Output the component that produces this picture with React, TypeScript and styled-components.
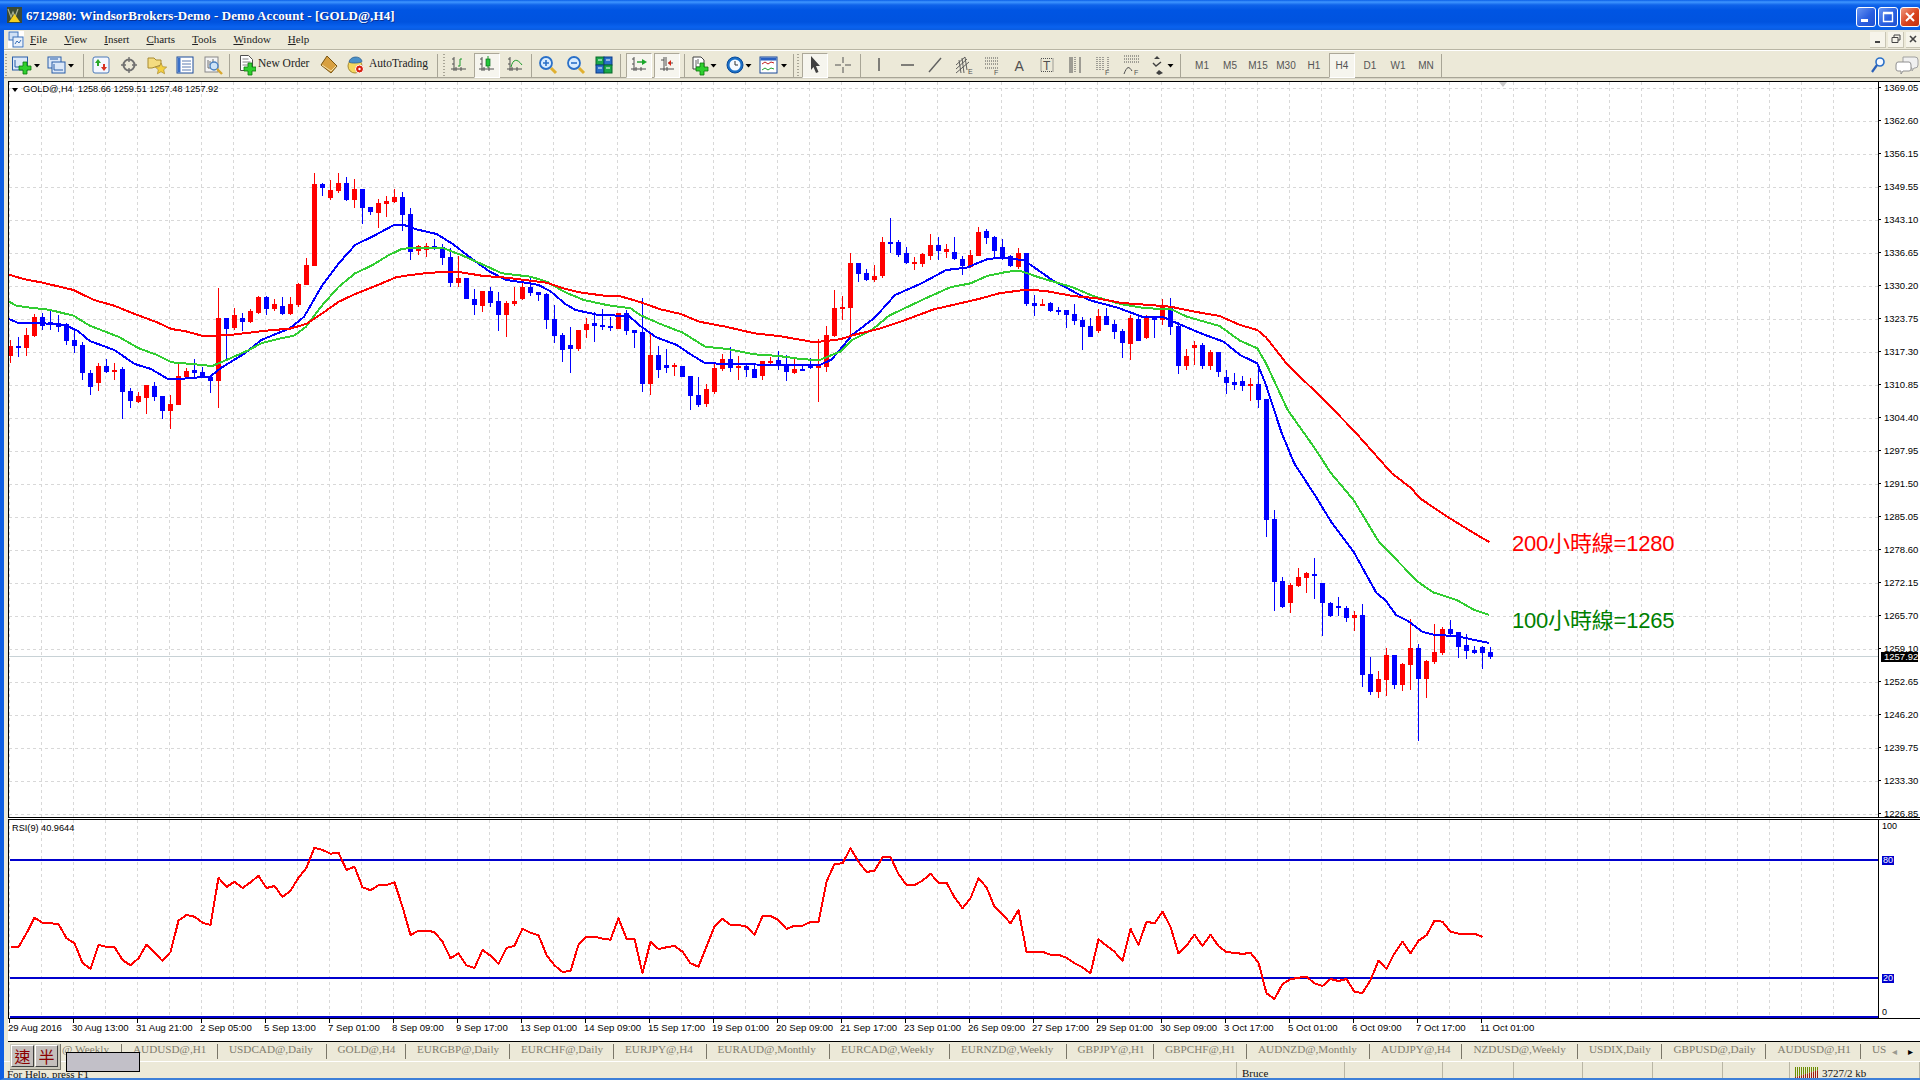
import React from 'react';
import styled, { createGlobalStyle } from 'styled-components';

const uiFont = `'Liberation Serif', 'Noto Sans CJK TC', serif`;
const chartFont = `'Liberation Sans', 'Noto Sans CJK TC', sans-serif`;

type Pt = [number, number];
// colour (1 red, 0 blue), wick top, body top, body bottom, wick bottom, measured on 3x crops
type Bar = [number, number, number, number, number];

const barsA: Bar[] = [
    [1,540,558,588,608],[0,530,558,564,590],[1,505,525,564,588],[1,462,471,528,530],[0,458,470,497,510],[0,452,487,495,510],
    [0,465,490,500,515],[0,490,492,543,555],[0,510,540,558,580],[0,545,555,638,660],[0,630,638,680,704],[1,610,618,668,692],
    [0,598,618,635,640],[1,610,630,635,660],[0,622,627,695,778],[0,685,693,722,743],[1,695,708,725,730],[1,675,675,713,762],
    [0,667,678,710,722],[0,708,708,752,778],[1,705,733,752,806],[1,612,648,734,735],[1,625,633,652,655],[0,597,630,638,650],
    [0,620,636,652,655],[0,650,652,662,698],[1,385,474,662,743],[0,474,474,507,600],[1,445,465,504,510],[0,460,474,486,513],
    [1,448,453,486,490],[1,408,411,459,462],[0,408,411,447,465],[1,418,432,447,452],[0,412,438,462,465],[1,410,432,462,465],
    [1,368,372,434,440],[1,295,315,374,375],[1,40,72,318,318],[0,70,72,83,108],[1,60,90,114,119],[1,40,69,93,100],
    [0,52,69,120,122],[1,57,87,120,143],[0,87,87,144,192],[0,140,141,156,165],[1,118,129,158,204],[1,108,123,132,172],
    [1,87,111,126,130],[0,96,111,165,212],[0,145,162,276,300],[1,255,258,273,285],[1,250,258,270,290],[0,237,258,264,270],
    [0,252,262,294,315],[0,265,291,369,380],[1,288,354,369,380],[0,354,354,417,418],[0,388,417,435,465],[1,393,393,438,456],
    [0,380,393,429,440],[0,395,423,465,513],[1,423,429,465,531],[1,380,423,432,438],[1,370,381,417,420],[0,355,381,399,408],
    [0,395,396,405,422],[0,400,402,480,507],[0,435,477,528,549],[0,520,525,570,606],[0,502,555,567,639],[1,510,510,567,572],
    [1,475,492,510,535],[0,455,489,498,546],[0,448,495,501,510],[0,470,498,504,512],[1,458,459,507,507],[0,450,459,513,525],
    [0,510,510,519,565],
];

const barsB: Bar[] = [
    [0,295,396,552,576],[1,395,465,552,585],[0,437,465,510,535],[0,447,495,504,520],[1,490,495,501,528],[0,497,498,531,532],
    [0,528,528,588,630],[0,531,585,615,622],[1,553,567,612,620],[1,490,504,576,582],[1,462,477,507,512],[0,442,477,504,515],
    [1,468,498,504,540],[0,488,498,510,532],[0,495,507,534,535],[1,483,483,528,540],[1,470,483,487,495],[0,452,480,498,510],
    [0,465,492,516,543],[1,475,507,519,522],[0,492,507,510,512],[0,475,499,503,507],[1,418,498,503,606],[1,378,405,501,516],
    [1,270,324,408,410],[1,288,321,327,360],[1,159,189,324,408],[0,189,189,222,246],[0,207,219,240,243],[1,195,228,240,246],
    [1,111,126,228,234],[0,54,126,129,160],[0,120,126,165,170],[0,142,159,189,192],[1,170,186,189,210],[1,160,162,192,200],
    [1,102,135,168,180],[0,111,135,153,180],[1,132,147,156,175],[0,111,156,177,180],[0,168,177,198,225],[1,150,165,201,204],
    [1,82,96,168,168],[0,87,93,114,132],[0,108,111,153,175],[0,117,141,177,180],[0,165,168,198,200],[1,144,159,201,206],
    [0,159,159,312,318],[0,285,310,318,348],[1,297,312,318,318],[0,306,309,333,336],[0,322,331,333,345],[0,330,330,345,384],
    [0,312,342,363,375],[0,350,360,381,450],[0,355,378,411,411],[1,328,348,393,399],[0,325,348,375,375],[0,360,372,396,417],
    [0,387,393,429,474],[1,345,354,432,480],[0,348,357,423,423],[1,345,348,414,417],[0,348,348,360,414],[1,297,315,360,375],
    [0,294,318,381,405],[0,366,378,498,522],[1,447,468,498,510],[1,423,435,444,495],[0,430,435,498,507],[1,450,456,498,510],
    [0,455,456,516,530],[0,510,531,549,582],[0,520,546,555,570],[0,528,543,558,573],[1,535,552,555,603],[0,505,552,600,624],
];

const barsC: Bar[] = [
    [0,297,297,659,710],[0,630,657,846,932],[0,830,843,921,924],[1,850,855,908,938],[1,803,831,857,860],[1,815,820,833,880],
    [0,774,822,825,897],[0,849,849,908,1007],[0,906,909,948,950],[0,891,918,923,948],[0,918,924,953,965],[1,933,945,953,992],
    [0,912,945,1124,1160],[0,1071,1122,1175,1185],[1,1112,1137,1175,1193],[1,1044,1065,1140,1187],[0,1065,1065,1155,1167],[1,1089,1092,1155,1172],
    [1,958,1044,1095,1170],[0,1032,1044,1137,1323],[1,1080,1083,1137,1193],[1,972,1056,1086,1092],[1,980,987,1060,1065],[0,960,987,1002,1010],
    [0,996,996,1041,1074],[0,1002,1035,1053,1077],[0,1038,1050,1059,1062],[0,1038,1041,1059,1107],[0,1041,1056,1071,1077],
];

const toBars = (rows: Bar[], base: number): Bar[] =>
    rows.map(([c, a, b, d, e]) => [c, base + a / 3, base + b / 3, base + d / 3, base + e / 3]);

const allBars = [...toBars(barsA, 160), ...toBars(barsB, 200), ...toBars(barsC, 300)];

const crop = (x0: number, y0: number, sx: number) => (rows: Pt[]): Pt[] =>
    rows.map(([x, y]) => [x0 + x / sx, y0 + y / 3]);
const cropA = crop(0, 160, 2.45);
const cropB = crop(640, 200, 2.45);
const cropC = crop(1240, 300, 2.306);

const maRed = [
    ...cropA([[22,344],[60,358],[100,367],[180,390],[230,420],[280,437],[330,462],[385,487],[420,507],[455,514],[495,527],[530,527],[570,524],[610,518],[660,511],[710,506],[750,492],[790,460],[830,425],[870,402],[920,378],[970,352],[1000,346],[1040,340],[1090,335],[1130,337],[1180,347],[1240,353],[1300,362],[1340,368],[1380,385],[1420,397],[1480,407],[1520,409],[1568,426]]),
    ...cropB([[50,328],[100,342],[145,365],[210,380],[280,400],[340,408],[420,425],[440,425],[490,418],[530,403],[590,385],[650,360],[720,328],[830,297],[880,280],[940,270],[990,272],[1060,288],[1120,295],[1180,309],[1240,314],[1300,320],[1350,333],[1420,348]]),
    ...cropC([[0,75],[40,90],[60,112],[110,195],[190,295],[265,395],[350,520],[395,565],[415,595],[480,652],[540,700],[575,726]]),
];

const maGreen = [
    ...cropA([[22,425],[40,437],[80,444],[120,449],[180,467],[220,497],[290,530],[340,565],[385,585],[420,607],[470,612],[520,618],[560,597],[610,570],[640,550],[680,537],[720,527],[750,500],[790,435],[830,380],[870,340],[910,317],[950,287],[985,266],[1020,264],[1085,264],[1130,285],[1180,312],[1230,340],[1300,350],[1340,365],[1385,397],[1430,420],[1490,436],[1545,445],[1568,465]]),
    ...cropB([[50,372],[105,398],[160,440],[215,447],[280,463],[340,468],[400,478],[440,480],[490,455],[520,420],[570,388],[610,347],[700,295],[760,262],[810,250],[850,228],[900,215],[930,212],[980,233],[1060,262],[1110,288],[1180,313],[1240,325],[1300,327],[1340,350],[1420,378]]),
    ...cropC([[0,122],[40,145],[60,190],[110,330],[170,440],[210,520],[262,600],[320,725],[410,845],[445,877],[500,900],[540,930],[575,945]]),
];

const maBlue = [
    ...cropA([[22,477],[45,489],[100,489],[160,496],[190,512],[220,543],[280,570],[330,612],[370,627],[410,656],[440,657],[490,652],[515,650],[540,625],[600,580],[640,540],[710,505],[745,470],[790,375],[830,310],[870,255],[920,225],[965,195],[990,195],[1020,208],[1070,222],[1110,253],[1160,300],[1200,335],[1240,360],[1280,367],[1320,375],[1350,395],[1385,432],[1410,450],[1470,466],[1540,467],[1568,497]]),
    ...cropB([[40,412],[90,435],[120,460],[160,490],[250,492],[340,496],[440,496],[470,478],[520,405],[575,353],[625,285],[690,250],[750,210],[800,203],[850,178],[880,173],[940,180],[1010,240],[1100,300],[1170,323],[1230,350],[1280,350],[1320,372],[1380,403],[1430,425]]),
    ...cropC([[0,165],[40,190],[60,255],[95,395],[125,490],[175,590],[210,665],[262,755],[315,880],[335,900],[360,945],[390,965],[420,995],[450,1005],[500,1008],[540,1020],[575,1029]]),
];

const rsiY = (ys: number[], first: number) => ys.map((y, i): Pt => [first + i * 8, 810 + y / 3]);
const rsiLine = rsiY(
    [411,411,370,323,338,340,342,385,400,458,477,404,411,411,450,466,445,404,428,453,426,332,315,320,338,345,203,231,215,234,217,197,234,228,261,242,203,173,113,120,131,128,180,170,232,241,226,225,217,290,375,362,362,366,395,445,430,466,474,420,437,462,414,407,356,368,376,435,466,486,483,404,380,380,386,389,325,386,386,
     490,395,417,412,408,425,460,470,410,350,326,345,345,350,375,318,318,330,357,347,347,336,335,215,162,160,115,155,186,182,142,141,192,225,225,212,191,218,218,262,295,265,205,232,290,313,340,300,425,425,425,434,434,443,460,472,490,388,407,425,453,356,405,335,340,305,350,430,407,374,408,374,408,427,428,432,428,458,550,567,
     522,508,503,500,520,528,507,513,507,546,549,510,452,477,430,395,430,392,376,332,335,365,371,371,371,381],
    10.5,
);

const toPoints = (pts: Pt[]) => pts.map(([x, y]) => `${x.toFixed(1)},${y.toFixed(1)}`).join(' ');

const priceLabels = ['1369.05','1362.60','1356.15','1349.55','1343.10','1336.65','1330.20','1323.75','1317.30','1310.85','1304.40','1297.95','1291.50','1285.05','1278.60','1272.15','1265.70','1259.10','1252.65','1246.20','1239.75','1233.30','1226.85'];
const timeLabels = ['29 Aug 2016','30 Aug 13:00','31 Aug 21:00','2 Sep 05:00','5 Sep 13:00','7 Sep 01:00','8 Sep 09:00','9 Sep 17:00','13 Sep 01:00','14 Sep 09:00','15 Sep 17:00','19 Sep 01:00','20 Sep 09:00','21 Sep 17:00','23 Sep 01:00','26 Sep 09:00','27 Sep 17:00','29 Sep 01:00','30 Sep 09:00','3 Oct 17:00','5 Oct 01:00','6 Oct 09:00','7 Oct 17:00','11 Oct 01:00'];
const tabs: [string, number][] = [['@,Weekly',118],['AUDUSD@,H1',96],['USDCAD@,Daily',108.5],['GOLD@,H4',79.5],['EURGBP@,Daily',104],['EURCHF@,Daily',104],['EURJPY@,H4',92.5],['EURAUD@,Monthly',123.5],['EURCAD@,Weekly',120],['EURNZD@,Weekly',116.5],['GBPJPY@,H1',87.5],['GBPCHF@,H1',93],['AUDNZD@,Monthly',123],['AUDJPY@,H4',92.4],['NZDUSD@,Weekly',115.6],['USDIX,Daily',84.4],['GBPUSD@,Daily',104.1],['AUDUSD@,H1',94.5],['US',60]];
const menus = [['F','ile'],['V','iew'],['I','nsert'],['C','harts'],['T','ools'],['W','indow'],['H','elp']];
const periods = ['M1','M5','M15','M30','H1','H4','D1','W1','MN'];
const statusCells = [1233, 108, 98, 71, 69, 70, 70, 67];

const GlobalStyle = createGlobalStyle`
    html, body {
        margin: 0;
        width: 1920px;
        height: 1080px;
        overflow: hidden;
        background: #ece9d8;
    }
`;

const Window = styled.div`
    position: relative;
    display: flex;
    flex-direction: column;
    width: 1920px;
    height: 1080px;
    overflow: hidden;
    font-family: ${uiFont};
    background: #ece9d8;
`;

const TitleBar = styled.div`
    flex: 0 0 30px;
    display: flex;
    align-items: center;
    padding-left: 7px;
    background: linear-gradient(180deg, #0a5fe8 0, #3f96ff 2px, #0f63ea 5px, #0055e3 10px, #0053df 22px, #0a62ee 27px, #0a5ce0 30px);
`;

const TitleText = styled.span`
    margin-left: 4px;
    padding-top: 2px;
    color: #ffffff;
    font-size: 13px;
    font-weight: 700;
    letter-spacing: 0.08px;
    white-space: nowrap;
    text-shadow: 1px 1px 0 #0a2f90;
`;

const WindowButtons = styled.div`
    display: flex;
    gap: 2px;
    margin-left: auto;
    padding-top: 3px;
`;

const CaptionButton = styled.div<{ $close?: boolean }>`
    width: 20px;
    height: 20px;
    display: flex;
    align-items: center;
    justify-content: center;
    box-sizing: border-box;
    border: 1px solid #ffffff;
    border-radius: 3px;
    background: ${({ $close }) =>
        $close ? 'linear-gradient(135deg, #ee9a80, #d9421c 55%, #c23210)' : 'linear-gradient(135deg, #6a96f2, #2a5fe0 55%, #2050d0)'};
`;

const Body = styled.div`
    flex: 1;
    min-height: 0;
    display: flex;
    flex-direction: column;
    border-left: 4px solid #0f5fe4;
    border-bottom: 2px solid #3d7fd8;
`;

const MenuBar = styled.div`
    flex: 0 0 20px;
    display: flex;
    align-items: center;
    box-sizing: border-box;
    padding-left: 4px;
    border-bottom: 1px solid #b8b5a4;
`;

const MenuItem = styled.span`
    margin-right: 17px;
    margin-top: -2px;
    font-size: 11px;
    color: #222222;
`;

const MdiButtons = styled.div`
    display: flex;
    gap: 2px;
    margin-left: auto;
`;

const MdiButton = styled.div`
    width: 16px;
    height: 16px;
    display: flex;
    align-items: center;
    justify-content: center;
    box-sizing: border-box;
    background: #f6f4ea;
    border-right: 1px solid #c8c5b4;
    border-bottom: 1px solid #c8c5b4;
    &:last-child {
        width: 14px;
        border-right: 0;
    }
`;

const Toolbar = styled.div`
    flex: 0 0 28px;
    min-height: 0;
    display: flex;
    align-items: center;
    box-sizing: border-box;
    padding-top: 2px;
    border-top: 1px solid #ffffff;
    border-bottom: 1px solid #a8a596;
    box-shadow: 0 1px 0 #d8d5c6;
`;

const Grip = styled.div<{ $left?: number; $w: number }>`
    flex: 0 0 ${({ $w }) => $w}px;
    height: 22px;
    background: repeating-linear-gradient(180deg, #a8a596 0 1px, transparent 1px 3px) no-repeat;
    background-size: 2px 100%;
    background-position: ${({ $left }) => $left ?? 1}px 0;
`;

const Divider = styled.div<{ $w: number; $left: number }>`
    flex: 0 0 ${({ $w }) => $w}px;
    height: 23px;
    background: linear-gradient(#a8a596, #a8a596) no-repeat;
    background-size: 1px 100%;
    background-position: ${({ $left }) => $left}px 0;
`;

const ToolButton = styled.div<{ $pressed?: boolean; $w?: number }>`
    flex: 0 0 ${({ $w }) => $w ?? 26}px;
    min-width: 0;
    height: 25px;
    margin: 0 1px;
    box-sizing: border-box;
    display: flex;
    align-items: center;
    justify-content: center;
    ${({ $pressed }) =>
        $pressed &&
        `background: #f6f5ee;
         border-top: 1px solid #aca899;
         border-left: 1px solid #aca899;
         border-right: 1px solid #ffffff;
         border-bottom: 1px solid #ffffff;`}
`;

const DropButton = styled.div<{ $w: number }>`
    flex: 0 0 ${({ $w }) => $w}px;
    min-width: 0;
    height: 26px;
`;

const TextButton = styled.div<{ $w: number; $icon: number }>`
    flex: 0 0 ${({ $w }) => $w}px;
    min-width: 0;
    box-sizing: border-box;
    display: flex;
    align-items: center;
    height: 26px;
    padding-left: ${({ $icon }) => $icon}px;
    font-size: 11.5px;
    color: #222222;
    white-space: nowrap;
`;

const ToolLabel = styled.span`
    margin-top: -4px;
`;

const PeriodButton = styled(ToolButton)`
    font-family: ${chartFont};
    font-size: 10px;
    color: #555555;
`;

const ToolGap = styled.div<{ $w: number }>`
    flex: 0 0 ${({ $w }) => $w}px;
`;

const ToolbarEnd = styled.div`
    display: flex;
    margin-left: auto;
`;

const ChartWindow = styled.div`
    flex: 1;
    min-height: 0;
    margin-top: 3px;
    padding-left: 4px;
    display: flex;
    flex-direction: column;
`;

const Pane = styled.div<{ $h: number; $closed?: boolean }>`
    flex: 0 0 ${({ $h }) => $h}px;
    min-height: 0;
    overflow: hidden;
    display: flex;
    background: #ffffff;
    border-top: 1px solid #000000;
    border-bottom: ${({ $closed }) => ($closed ? '1px solid #000000' : '0')};
    box-sizing: border-box;
`;

const PaneGap = styled.div`
    flex: 0 0 1px;
    background: #ffffff;
`;

const Plot = styled.div`
    position: relative;
    flex: 0 0 1871px;
    box-sizing: border-box;
    border-left: 1px solid #000000;
    border-right: 1px solid #000000;
    overflow: hidden;
    svg {
        display: block;
    }
`;

const Legend = styled.div`
    position: absolute;
    left: 3px;
    top: 2px;
    display: flex;
    align-items: center;
    font-family: ${chartFont};
    font-size: 9.2px;
    line-height: 11px;
    color: #000000;
    white-space: pre;
`;

const LegendCaret = styled.span`
    width: 0;
    height: 0;
    margin-right: 5px;
    border-left: 3.5px solid transparent;
    border-right: 3.5px solid transparent;
    border-top: 4px solid #000000;
`;

const MaNote = styled.div<{ $top: number; $color: string }>`
    position: absolute;
    left: 1503px;
    top: ${({ $top }) => $top}px;
    font-family: ${chartFont};
    font-size: 22px;
    line-height: 26px;
    letter-spacing: -0.2px;
    color: ${({ $color }) => $color};
    white-space: nowrap;
`;

const PriceAxis = styled.div`
    position: relative;
    flex: 1;
    overflow: hidden;
`;

const PriceList = styled.div`
    margin-top: -11px;
    display: flex;
    flex-direction: column;
`;

const PriceRow = styled.div`
    flex: 0 0 33px;
    display: flex;
    align-items: center;
    font-family: ${chartFont};
    font-size: 9.5px;
    color: #000000;
    &::before {
        content: '';
        width: 2px;
        height: 1px;
        margin-right: 3px;
        background: #000000;
    }
`;

const LastPrice = styled.div`
    position: absolute;
    left: 2px;
    top: 570px;
    width: 37px;
    height: 10px;
    background: #000000;
    color: #ffffff;
    font-family: ${chartFont};
    font-size: 9.5px;
    line-height: 10px;
    padding-left: 3px;
    box-sizing: border-box;
`;

const LevelLabel = styled.div<{ $top: number; $boxed?: boolean }>`
    position: absolute;
    left: 3px;
    top: ${({ $top }) => $top}px;
    height: 9px;
    padding: 0 ${({ $boxed }) => ($boxed ? '1px' : '0')};
    font-family: ${chartFont};
    font-size: 9px;
    line-height: 9px;
    color: ${({ $boxed }) => ($boxed ? '#ffffff' : '#000000')};
    background: ${({ $boxed }) => ($boxed ? '#0000cd' : 'transparent')};
`;

const PaneTitle = styled.div`
    position: absolute;
    left: 3px;
    top: 3px;
    font-family: ${chartFont};
    font-size: 9.2px;
    line-height: 11px;
    color: #000000;
`;

const TimeAxis = styled.div`
    flex: 0 0 24px;
    box-sizing: border-box;
    display: grid;
    grid-template-columns: repeat(24, 64px);
    background: #ffffff;
    border-top: 1px solid #000000;
    border-bottom: 1px solid #000000;
`;

const TimeCell = styled.div`
    position: relative;
    padding-top: 3px;
    font-family: ${chartFont};
    font-size: 9.6px;
    line-height: 12px;
    color: #000000;
    white-space: nowrap;
    &::before {
        content: '';
        position: absolute;
        left: 1px;
        top: 0;
        width: 1px;
        height: 4px;
        background: #000000;
    }
`;

const TabBar = styled.div`
    flex: 0 0 20px;
    display: flex;
    box-sizing: border-box;
    border-bottom: 1px solid #ffffff;
`;

const TabScroller = styled.div`
    flex: 0 0 1885px;
    display: flex;
    align-items: center;
    overflow: hidden;
`;

const Tab = styled.div<{ $w: number; $pad: number; $last?: boolean }>`
    flex: 0 0 ${({ $w }) => $w}px;
    box-sizing: border-box;
    height: 15px;
    padding-left: ${({ $pad }) => $pad}px;
    border-right: ${({ $last }) => ($last ? '0' : '1px solid #7a7668')};
    font-size: 11.2px;
    line-height: 11px;
    color: #7f7b6c;
    white-space: nowrap;
`;

const TabArrows = styled.div`
    display: flex;
    align-items: center;
    gap: 11px;
    padding-left: 3px;
    color: #000000;
    font-family: ${chartFont};
    font-size: 10px;
`;

const StatusBar = styled.div`
    flex: 0 0 16px;
    display: flex;
    overflow: hidden;
`;

const StatusCell = styled.div<{ $w?: number }>`
    flex: ${({ $w }) => ($w ? `0 0 ${$w}px` : '1')};
    box-sizing: border-box;
    display: flex;
    align-items: flex-start;
    padding: 5px 0 0 5px;
    border-right: 1px solid #b8b5a4;
    font-size: 11px;
    line-height: 12px;
    color: #111111;
    white-space: nowrap;
`;

const HelpText = styled.span`
    margin-left: -2px;
    margin-top: 1px;
`;

const ImeBar = styled.div`
    position: absolute;
    left: 10px;
    top: 1044px;
    display: flex;
    gap: 1px;
    padding: 1px 2px 2px 1px;
    background: #c9c7ba;
    border-right: 1px solid #77756a;
    border-bottom: 1px solid #77756a;
`;

const ImeKey = styled.div`
    width: 23px;
    height: 22px;
    box-sizing: border-box;
    display: flex;
    align-items: center;
    justify-content: center;
    font-family: 'Noto Sans CJK TC', sans-serif;
    font-size: 16px;
    color: #8b0000;
    background: #c4bfbc;
    border-top: 1px solid #ffffff;
    border-left: 1px solid #ffffff;
    border-right: 1px solid #404040;
    border-bottom: 1px solid #404040;
`;

const ImeStatus = styled.div`
    position: absolute;
    left: 66px;
    top: 1052px;
    width: 74px;
    height: 20px;
    box-sizing: border-box;
    background: #c2c0c8;
    border: 1px solid #000000;
`;

const Plus = ({ x, y }: { x: number; y: number }) => (
    <path
        d={`M${x - 2} ${y - 6}h4v4h4v4h-4v4h-4v-4h-4v-4h4z`}
        fill="#2fd02f"
        stroke="#0a7a0a"
        strokeWidth="0.8"
    />
);

const Caret = ({ x }: { x: number }) => <path d={`M${x - 3} -1h6l-3 3.5z`} fill="#000000" />;

const Icon = ({ children, w = 26 }: { children: React.ReactNode; w?: number }) => (
    <svg width={w} height="26" viewBox={`-13 -13 ${w} 26`} style={{ flex: 'none', display: 'block' }}>
        {children}
    </svg>
);

const Axes = () => (
    <path d="M-5 -8V6M-8 4H7M-7 -6H-5M-7 -1H-5M-3 2V6M2 2V6" stroke="#505050" strokeWidth="1" fill="none" />
);

const Glass = ({ mark }: { mark: string }) => (
    <g>
        <path d="M3 3L8 8" stroke="#e0b030" strokeWidth="3" />
        <circle cx="-2" cy="-2" r="6" fill="#d8ecff" stroke="#2a70c8" strokeWidth="1.8" />
        <path d={mark} stroke="#2a70c8" strokeWidth="1.6" />
    </g>
);

const GlyphText = ({ x, y, size, children, weight = 400 }: { x: number; y: number; size: number; children: string; weight?: number }) => (
    <text x={x} y={y} fontFamily="Liberation Sans, sans-serif" fontSize={size} fontWeight={weight} fill="#505050">
        {children}
    </text>
);

const Dotted = ({ d }: { d: string }) => <path d={d} stroke="#505050" strokeWidth="1" strokeDasharray="1 1" fill="none" />;

const Candles = () => (
    <g shapeRendering="crispEdges">
        {allBars.map(([c, wt, bt, bb, wb], i) => {
            const x = 10 + i * 8;
            const fill = c ? '#ff0000' : '#0000ff';
            return (
                <g key={i} fill={fill}>
                    <rect x={x} y={wt} width="1" height={Math.max(wb - wt, 1)} />
                    <rect x={x - 2} y={bt} width="5" height={Math.max(bb - bt, 2)} />
                </g>
            );
        })}
    </g>
);

const verticals = Array.from({ length: 58 }, (_, i) => 9.5 + i * 32);
const horizontals = Array.from({ length: 23 }, (_, i) => 88.5 + i * 33);

const Grid = ({ y1, y2, rows }: { y1: number; y2: number; rows: boolean }) => (
    <g stroke="#d8d8d8" strokeWidth="1" strokeDasharray="3 3" shapeRendering="crispEdges">
        {verticals.map((x) => (
            <line key={x} x1={x} x2={x} y1={y1} y2={y2} />
        ))}
        {rows && horizontals.map((y) => <line key={y} x1={9} x2={1879} y1={y} y2={y} />)}
    </g>
);

const MainChart = () => (
    <svg width="1869" height="735" viewBox="9 82 1869 735">
        <Grid y1={82} y2={817} rows />
        <line x1="9" x2="1879" y1="656.5" y2="656.5" stroke="#c8d2d6" shapeRendering="crispEdges" />
        <path d="M1499 82h8l-4 5z" fill="#c8c8c8" />
        <Candles />
        <g fill="none" strokeWidth="2" strokeLinejoin="round" shapeRendering="crispEdges">
            <polyline points={toPoints(maBlue)} stroke="#0000ff" />
            <polyline points={toPoints(maGreen)} stroke="#32cd32" />
            <polyline points={toPoints(maRed)} stroke="#ff0000" />
        </g>
    </svg>
);

const RsiChart = () => (
    <svg width="1869" height="198" viewBox="9 820 1869 198">
        <Grid y1={820} y2={1018} rows={false} />
        <g stroke="#0000cd" strokeWidth="2" shapeRendering="crispEdges">
            <line x1="10" x2="1879" y1="860" y2="860" />
            <line x1="10" x2="1879" y1="978" y2="978" />
            <line x1="10" x2="1879" y1="1017" y2="1017" />
        </g>
        <polyline points={toPoints(rsiLine)} fill="none" stroke="#ff0000" strokeWidth="2" strokeLinejoin="round" shapeRendering="crispEdges" />
    </svg>
);

export default function App() {
    return (
        <>
            <GlobalStyle />
            <Window>
                <TitleBar>
                    <svg width="15" height="16" viewBox="0 0 15 16">
                        <rect width="15" height="16" fill="#3c4a34" />
                        <path d="M1 2l3 8 2-5 2 5 3-8" stroke="#a8b090" strokeWidth="1.2" fill="none" />
                        <path d="M7.5 7L13 15H2z" fill="#f4d020" />
                    </svg>
                    <TitleText>6712980: WindsorBrokers-Demo - Demo Account - [GOLD@,H4]</TitleText>
                    <WindowButtons>
                        <CaptionButton>
                            <svg width="14" height="14"><rect x="2" y="9" width="7" height="3" fill="#ffffff" /></svg>
                        </CaptionButton>
                        <CaptionButton>
                            <svg width="14" height="14"><path d="M2.5 3.5h9v8h-9zM2 2.5h10" fill="none" stroke="#ffffff" strokeWidth="1.4" /></svg>
                        </CaptionButton>
                        <CaptionButton $close>
                            <svg width="14" height="14"><path d="M3 3l8 8M11 3l-8 8" stroke="#ffffff" strokeWidth="2" /></svg>
                        </CaptionButton>
                    </WindowButtons>
                </TitleBar>
                <Body>
                    <MenuBar>
                        <svg width="16" height="17" viewBox="0 0 16 17" style={{ marginRight: 6 }}>
                            <rect width="16" height="17" fill="#ffffff" />
                            <rect x="1" y="1" width="9" height="8" fill="#cfe0f5" stroke="#3a70b8" />
                            <rect x="5" y="6" width="10" height="10" fill="#e8f0fa" stroke="#3a70b8" />
                            <path d="M7 13l2-3 2 2 2-3" stroke="#3a70b8" fill="none" />
                        </svg>
                        {menus.map(([key, rest]) => (
                            <MenuItem key={key}>
                                <u>{key}</u>
                                {rest}
                            </MenuItem>
                        ))}
                        <MdiButtons>
                            <MdiButton>
                                <svg width="10" height="10"><rect x="2" y="7" width="5" height="2" fill="#444444" /></svg>
                            </MdiButton>
                            <MdiButton>
                                <svg width="10" height="10"><path d="M3 3V1h6v5H7M1 3.5h6v5H1z" fill="none" stroke="#444444" /></svg>
                            </MdiButton>
                            <MdiButton>
                                <svg width="10" height="10"><path d="M2 2l6 6M8 2l-6 6" stroke="#444444" strokeWidth="1.6" /></svg>
                            </MdiButton>
                        </MdiButtons>
                    </MenuBar>
                    <Toolbar>
                        <Grip $w={5} />
                        <DropButton $w={35}>
                            <Icon w={35}>
                                <rect x="-9.5" y="-8" width="15" height="13" fill="#dce8f8" stroke="#2a5ea8" />
                                <path d="M-7 -5V2H2" stroke="#2a5ea8" fill="none" />
                                <Plus x={3} y={3} />
                                <g transform="translate(15 0)"><Caret x={0} /></g>
                            </Icon>
                        </DropButton>
                        <DropButton $w={35}>
                            <Icon w={35}>
                                <rect x="-9" y="-8" width="13" height="11" fill="#dce8f8" stroke="#2a5ea8" />
                                <rect x="-5" y="-3" width="13" height="11" fill="#dce8f8" stroke="#2a5ea8" />
                                <path d="M-3 -1V5H6M-7 -6H1" stroke="#2a5ea8" fill="none" />
                                <g transform="translate(14 0)"><Caret x={0} /></g>
                            </Icon>
                        </DropButton>
                        <Divider $w={8} $left={4} />
                        <ToolButton>
                            <Icon>
                                <rect x="-8" y="-8" width="16" height="16" rx="2" fill="#f4f7ff" stroke="#4a78b8" />
                                <path d="M-3 -6L0 -2H-2V1H-4V-2H-6z" fill="#2aa82a" />
                                <path d="M3 6L0 2H2V-1H4V2H6z" fill="#d83020" />
                            </Icon>
                        </ToolButton>
                        <ToolButton>
                            <Icon>
                                <circle cx="0" cy="0" r="5.5" fill="none" stroke="#707070" strokeWidth="2" />
                                <path d="M0 -8V-3M0 3V8M-8 0H-3M3 0H8" stroke="#707070" strokeWidth="1.4" />
                            </Icon>
                        </ToolButton>
                        <ToolButton>
                            <Icon>
                                <path d="M-9 -7h6l2 2h5v5l-9 3h-4z" fill="#f4dc80" stroke="#a88a30" />
                                <path d="M4 -2l1.7 3.7 4 .4-3 2.7.9 4-3.6-2.1-3.6 2.1.9-4-3-2.7 4-.4z" fill="#f4d040" stroke="#a88a30" strokeWidth="0.7" />
                            </Icon>
                        </ToolButton>
                        <ToolButton>
                            <Icon>
                                <rect x="-8" y="-8" width="16" height="16" fill="#ffffff" stroke="#1a4a98" />
                                <rect x="-7.5" y="-7.5" width="3" height="15" fill="#3a70c8" />
                                <path d="M-3 -4H6M-3 -1H6M-3 2H6M-3 5H6" stroke="#5a7ab0" />
                            </Icon>
                        </ToolButton>
                        <ToolButton>
                            <Icon>
                                <rect x="-8" y="-8" width="13" height="15" fill="#f4f4f4" stroke="#888888" />
                                <path d="M-5 -5V3H3M-3 -4V0M0 -6V-1" stroke="#707070" fill="none" />
                                <circle cx="1" cy="1" r="4" fill="#cfe4f8" stroke="#4a80c0" strokeWidth="1.4" />
                                <path d="M4 4L9 9" stroke="#d8a830" strokeWidth="2.4" />
                            </Icon>
                        </ToolButton>
                        <Divider $w={4} $left={2} />
                        <TextButton $w={84} $icon={9}>
                            <svg width="16" height="22" viewBox="0 0 16 22" style={{ marginRight: 2 }}>
                                <path d="M0.5 1.5h8l4 4v11h-12z" fill="#ffffff" stroke="#505050" />
                                <path d="M2.5 5h6M2.5 8h8M2.5 11h6" stroke="#808080" />
                                <g transform="translate(1 0)"><Plus x={9} y={15} /></g>
                            </svg>
                            <ToolLabel>New Order</ToolLabel>
                        </TextButton>
                        <ToolButton>
                            <Icon>
                                <path d="M-2 -9L8 1 2 8l-10-8z" fill="#d8a040" stroke="#7a5410" />
                                <path d="M-7 0L2 6 7 1" fill="none" stroke="#f4e0a8" />
                            </Icon>
                        </ToolButton>
                        <TextButton $w={89} $icon={4}>
                            <svg width="18" height="22" viewBox="0 0 18 22" style={{ marginRight: 4 }}>
                                <circle cx="8" cy="12" r="7" fill="#f4d860" stroke="#a88a30" />
                                <path d="M2 8c1-6 11-7 13-1 1 2-11 3-13 1z" fill="#4a90c8" stroke="#2a5a88" strokeWidth="0.7" />
                                <circle cx="12.5" cy="15" r="4" fill="#d82010" stroke="#ffffff" />
                                <circle cx="12.5" cy="15" r="1.2" fill="#ffffff" />
                            </svg>
                            <ToolLabel>AutoTrading</ToolLabel>
                        </TextButton>
                        <Divider $w={9} $left={5} />
                        <Grip $w={4} $left={2} />
                        <ToolButton>
                            <Icon>
                                <Axes />
                                <path d="M1 -6V1M1 -6H3M1 1H-1" stroke="#1a9a2a" fill="none" />
                            </Icon>
                        </ToolButton>
                        <ToolButton $pressed>
                            <Icon>
                                <Axes />
                                <path d="M1 -9V3" stroke="#1a9a2a" />
                                <rect x="-1" y="-6" width="4" height="7" fill="#22c83a" stroke="#0a6a1a" strokeWidth="0.7" />
                            </Icon>
                        </ToolButton>
                        <ToolButton>
                            <Icon>
                                <Axes />
                                <path d="M-4 2C-2 -6 2 -7 7 0" stroke="#1a9a2a" fill="none" />
                            </Icon>
                        </ToolButton>
                        <Divider $w={5} $left={2} />
                        <ToolButton>
                            <Icon><Glass mark="M-5 -2H1M-2 -5V1" /></Icon>
                        </ToolButton>
                        <ToolButton>
                            <Icon><Glass mark="M-5 -2H1" /></Icon>
                        </ToolButton>
                        <ToolButton>
                            <Icon>
                                <rect x="-8" y="-8" width="8" height="8" fill="#1aa84a" stroke="#0a6a2a" />
                                <rect x="0" y="-8" width="8" height="8" fill="#2a70c8" stroke="#0a3a88" />
                                <rect x="-8" y="0" width="8" height="8" fill="#2a70c8" stroke="#0a3a88" />
                                <rect x="0" y="0" width="8" height="8" fill="#1aa84a" stroke="#0a6a2a" />
                                <path d="M-6 -5H-2M2 -5H6M-6 3H-2M2 3H6" stroke="#ffffff" />
                            </Icon>
                        </ToolButton>
                        <Divider $w={7} $left={2} />
                        <ToolButton $pressed>
                            <Icon>
                                <Axes />
                                <path d="M-2 -3H4" stroke="#1a9a2a" strokeWidth="1.4" />
                                <path d="M3 -6L8 -3 3 0z" fill="#1aa82a" />
                            </Icon>
                        </ToolButton>
                        <ToolButton $pressed>
                            <Icon>
                                <path d="M-3 -8V6M-7 4H7M-6 -5H-3M0 2V6" stroke="#505050" fill="none" />
                                <path d="M1 -2H6M-1 -8V1" stroke="#505050" />
                                <path d="M1 -2L4 -5V1z" fill="#d82010" />
                            </Icon>
                        </ToolButton>
                        <Divider $w={6} $left={3} />
                        <DropButton $w={34}>
                            <Icon w={34}>
                                <path d="M-7 -8h8l3 3v9h-11z" fill="#ffffff" stroke="#404040" />
                                <path d="M-4 -5V2H1M-2 -6V-1" stroke="#606060" fill="none" />
                                <Plus x={2} y={4} />
                                <g transform="translate(13.5 0)"><Caret x={0} /></g>
                            </Icon>
                        </DropButton>
                        <DropButton $w={34}>
                            <Icon w={34}>
                                <circle cx="1" cy="0" r="8" fill="#1a70c8" stroke="#0a4a98" />
                                <circle cx="1" cy="0" r="5.5" fill="#f4f8ff" />
                                <path d="M1 -4V0H4" stroke="#303030" fill="none" />
                                <g transform="translate(14.5 0)"><Caret x={0} /></g>
                            </Icon>
                        </DropButton>
                        <DropButton $w={35}>
                            <Icon w={35}>
                                <rect x="-8" y="-8" width="17" height="16" fill="#ffffff" stroke="#1a4a98" />
                                <rect x="-7.5" y="-7.5" width="16" height="3" fill="#2a60c0" />
                                <path d="M-6 -1l3-2 3 2 3-2 3 1" stroke="#c02020" fill="none" />
                                <path d="M-6 5l3-2 3 2 3-2 3 1" stroke="#20a030" fill="none" />
                                <g transform="translate(16 0)"><Caret x={0} /></g>
                            </Icon>
                        </DropButton>
                        <Divider $w={5} $left={3} />
                        <Grip $w={6} $left={2} />
                        <ToolButton $pressed>
                            <Icon>
                                <path d="M-4 -9L5 1H1L3.5 7 1 8-1.5 2-4 5z" fill="#404040" />
                            </Icon>
                        </ToolButton>
                        <ToolButton>
                            <Icon>
                                <path d="M0 -8V-2M0 2V8M-8 0H-2M2 0H8" stroke="#505050" />
                            </Icon>
                        </ToolButton>
                        <Divider $w={8} $left={3} />
                        <ToolButton>
                            <Icon><path d="M0 -7V6" stroke="#505050" strokeWidth="1.4" /></Icon>
                        </ToolButton>
                        <ToolButton>
                            <Icon><path d="M-6 0H7" stroke="#505050" strokeWidth="1.4" /></Icon>
                        </ToolButton>
                        <ToolButton>
                            <Icon><path d="M-6 7L6 -7" stroke="#606060" strokeWidth="1.4" /></Icon>
                        </ToolButton>
                        <ToolButton>
                            <Icon>
                                <path d="M-7 4L4 -6M-7 8L6 -3M-7 0L2 -8M-4 -5L-2 8M-1 -7L1 8M2 -8L4 5" stroke="#505050" strokeWidth="0.9" fill="none" />
                                <GlyphText x={5} y={9} size={7}>E</GlyphText>
                            </Icon>
                        </ToolButton>
                        <ToolButton>
                            <Icon>
                                <Dotted d="M-6 -7H7M-6 -4H7M-6 -1H7M-6 3H7" />
                                <GlyphText x={3} y={10} size={7}>F</GlyphText>
                            </Icon>
                        </ToolButton>
                        <ToolButton>
                            <Icon><GlyphText x={-4.5} y={6} size={14}>A</GlyphText></Icon>
                        </ToolButton>
                        <ToolButton>
                            <Icon>
                                <Dotted d="M-6 -6.5H6V6.5H-6Z" />
                                <GlyphText x={-4} y={4.5} size={12}>T</GlyphText>
                            </Icon>
                        </ToolButton>
                        <ToolButton>
                            <Icon>
                                <path d="M-5 -8V8M-3 -8V8M5 -8V8" stroke="#505050" />
                                <Dotted d="M0 -8V8" />
                            </Icon>
                        </ToolButton>
                        <ToolButton>
                            <Icon>
                                <Dotted d="M-6 -8V5M-3 -8V5M0 -8V5M5 -8V5" />
                                <GlyphText x={2} y={10} size={7}>F</GlyphText>
                            </Icon>
                        </ToolButton>
                        <ToolButton>
                            <Icon>
                                <Dotted d="M-7 -9H8M-7 -6H8M-7 -3H8" />
                                <path d="M-7 9C-4 1 -2 1 1 6" stroke="#505050" fill="none" />
                                <GlyphText x={3} y={10} size={7}>F</GlyphText>
                            </Icon>
                        </ToolButton>
                        <DropButton $w={34}>
                            <Icon w={34}>
                                <path d="M-1 -9l3 3h-6zM1 5l4 3-4 2-3-2z" fill="#404040" />
                                <path d="M-5 -2l3 3 5-4" stroke="#404040" strokeWidth="1.4" fill="none" />
                                <g transform="translate(12.5 0)"><Caret x={0} /></g>
                            </Icon>
                        </DropButton>
                        <Divider $w={9} $left={1} />
                        {periods.map((p) => (
                            <PeriodButton key={p} $pressed={p === 'H4'}>
                                {p}
                            </PeriodButton>
                        ))}
                        <Divider $w={3} $left={1} />
                        <ToolbarEnd>
                            <ToolButton>
                                <Icon>
                                    <circle cx="2" cy="-3" r="4" fill="#f4f8ff" stroke="#2a70c8" strokeWidth="1.6" />
                                    <path d="M-1 0L-6 7" stroke="#2a60b8" strokeWidth="2.2" />
                                </Icon>
                            </ToolButton>
                            <ToolGap $w={2} />
                            <ToolButton $w={24}>
                                <svg width="24" height="26" viewBox="0 0 24 26">
                                    <path d="M8 5h12q3 0 3 3v5q0 3-3 3h-1l-2 3v-3h-9z" fill="#f0f0f0" stroke="#a0a0a0" />
                                    <path d="M3 10h11q2 0 2 3v4q0 2-2 2H8l-2 3v-3H3q-2 0-2-2v-4q0-3 2-3z" fill="#ffffff" stroke="#909090" />
                                </svg>
                            </ToolButton>
                        </ToolbarEnd>
                    </Toolbar>
                    <ChartWindow>
                        <Pane $h={737} $closed>
                            <Plot>
                                <MainChart />
                                <Legend>
                                    <LegendCaret />
                                    GOLD@,H4  1258.66 1259.51 1257.48 1257.92
                                </Legend>
                                <MaNote $top={449} $color="#ff0000">200小時線=1280</MaNote>
                                <MaNote $top={526} $color="#008000">100小時線=1265</MaNote>
                            </Plot>
                            <PriceAxis>
                                <PriceList>
                                    {priceLabels.map((p) => (
                                        <PriceRow key={p}>{p}</PriceRow>
                                    ))}
                                </PriceList>
                                <LastPrice>1257.92</LastPrice>
                            </PriceAxis>
                        </Pane>
                        <PaneGap />
                        <Pane $h={199}>
                            <Plot>
                                <RsiChart />
                                <PaneTitle>RSI(9) 40.9644</PaneTitle>
                            </Plot>
                            <PriceAxis>
                                <LevelLabel $top={2}>100</LevelLabel>
                                <LevelLabel $top={36} $boxed>80</LevelLabel>
                                <LevelLabel $top={154} $boxed>20</LevelLabel>
                                <LevelLabel $top={188}>0</LevelLabel>
                            </PriceAxis>
                        </Pane>
                        <TimeAxis>
                            {timeLabels.map((t) => (
                                <TimeCell key={t}>{t}</TimeCell>
                            ))}
                        </TimeAxis>
                    </ChartWindow>
                    <TabBar>
                        <TabScroller>
                            {tabs.map(([name, w], i) => (
                                <Tab key={name + i} $w={w} $pad={i === 0 ? 58 : 11} $last={i === tabs.length - 1}>
                                    {name}
                                </Tab>
                            ))}
                        </TabScroller>
                        <TabArrows>
                            <span style={{ color: '#9a9a90' }}>◂</span>
                            <span>▸</span>
                        </TabArrows>
                    </TabBar>
                    <StatusBar>
                        {statusCells.map((w, i) => (
                            <StatusCell key={i} $w={w}>
                                {i === 0 && <HelpText>For Help, press F1</HelpText>}
                                {i === 1 && 'Bruce'}
                            </StatusCell>
                        ))}
                        <StatusCell>
                            <svg width="23" height="12" viewBox="0 0 23 12" style={{ marginRight: 4 }}>
                                {Array.from({ length: 12 }, (_, i) => (
                                    <g key={i}>
                                        <rect x={i * 2} y="0" width="1" height={10 - i * 0.6} fill="#6b8e00" />
                                        <rect x={i * 2} y={10 - i * 0.6} width="1" height={i * 0.6 + 2} fill="#a01a10" />
                                    </g>
                                ))}
                            </svg>
                            3727/2 kb
                        </StatusCell>
                    </StatusBar>
                </Body>
                <ImeBar>
                    <ImeKey>速</ImeKey>
                    <ImeKey>半</ImeKey>
                </ImeBar>
                <ImeStatus />
            </Window>
        </>
    );
}
